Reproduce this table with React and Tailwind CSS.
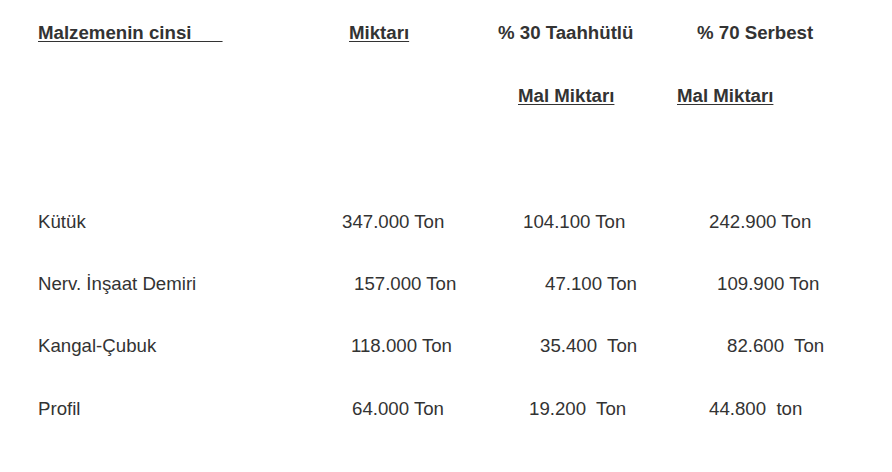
import React from "react";

const rows = [
  {
    name: "Kütük",
    cells: [
      { text: "347.000 Ton", pad: "pl-[12px]" },
      { text: "104.100 Ton", pad: "pl-[33px]" },
      { text: "242.900 Ton", pad: "pl-[39px]" },
    ],
  },
  {
    name: "Nerv. İnşaat Demiri",
    cells: [
      { text: "157.000 Ton", pad: "pl-[24px]" },
      { text: "47.100 Ton", pad: "pl-[55px]" },
      { text: "109.900 Ton", pad: "pl-[47px]" },
    ],
  },
  {
    name: "Kangal-Çubuk",
    cells: [
      { text: "118.000 Ton", pad: "pl-[21px]" },
      { text: "35.400  Ton", pad: "pl-[50px]" },
      { text: "82.600  Ton", pad: "pl-[57px]" },
    ],
  },
  {
    name: "Profil",
    cells: [
      { text: "64.000 Ton", pad: "pl-[22px]" },
      { text: "19.200  Ton", pad: "pl-[39px]" },
      { text: "44.800  ton", pad: "pl-[39px]" },
    ],
  },
];

const grid = "grid grid-cols-[292px_160px_180px_1fr] whitespace-pre";

export default function App() {
  return (
    <div
      className="w-[892px] h-[472px] bg-white text-[#333333] text-[18.67px] pl-[38px] pt-[1px]"
      style={{ fontFamily: '"Liberation Sans", Arial, sans-serif' }}
    >
      {/* Header */}
      <div className={`${grid} h-[64px] leading-[64px] font-bold`}>
        <span className="underline decoration-1 underline-offset-2">
          {"Malzemenin cinsi\u00a0\u00a0\u00a0\u00a0\u00a0\u00a0"}
        </span>
        <span className="pl-[19px]">
          <span className="underline decoration-1 underline-offset-2">Miktarı</span>
        </span>
        <span className="pl-[8px]">% 30 Taahhütlü</span>
        <span className="pl-[27px]">% 70 Serbest</span>
      </div>
      <div className={`${grid} h-[62px] leading-[62px] font-bold`}>
        <span />
        <span />
        <span className="pl-[28px]">
          <span className="underline decoration-1 underline-offset-2">Mal Miktarı</span>
        </span>
        <span className="pl-[7px]">
          <span className="underline decoration-1 underline-offset-2">Mal Miktarı</span>
        </span>
      </div>
      <div className="h-[64px]" />

      {/* Rows */}
      {rows.map((row) => (
        <div key={row.name} className={`${grid} h-[62.2px] leading-[62.2px]`}>
          <span>{row.name}</span>
          {row.cells.map((c, i) => (
            <span key={i} className={c.pad}>
              {c.text}
            </span>
          ))}
        </div>
      ))}
    </div>
  );
}
